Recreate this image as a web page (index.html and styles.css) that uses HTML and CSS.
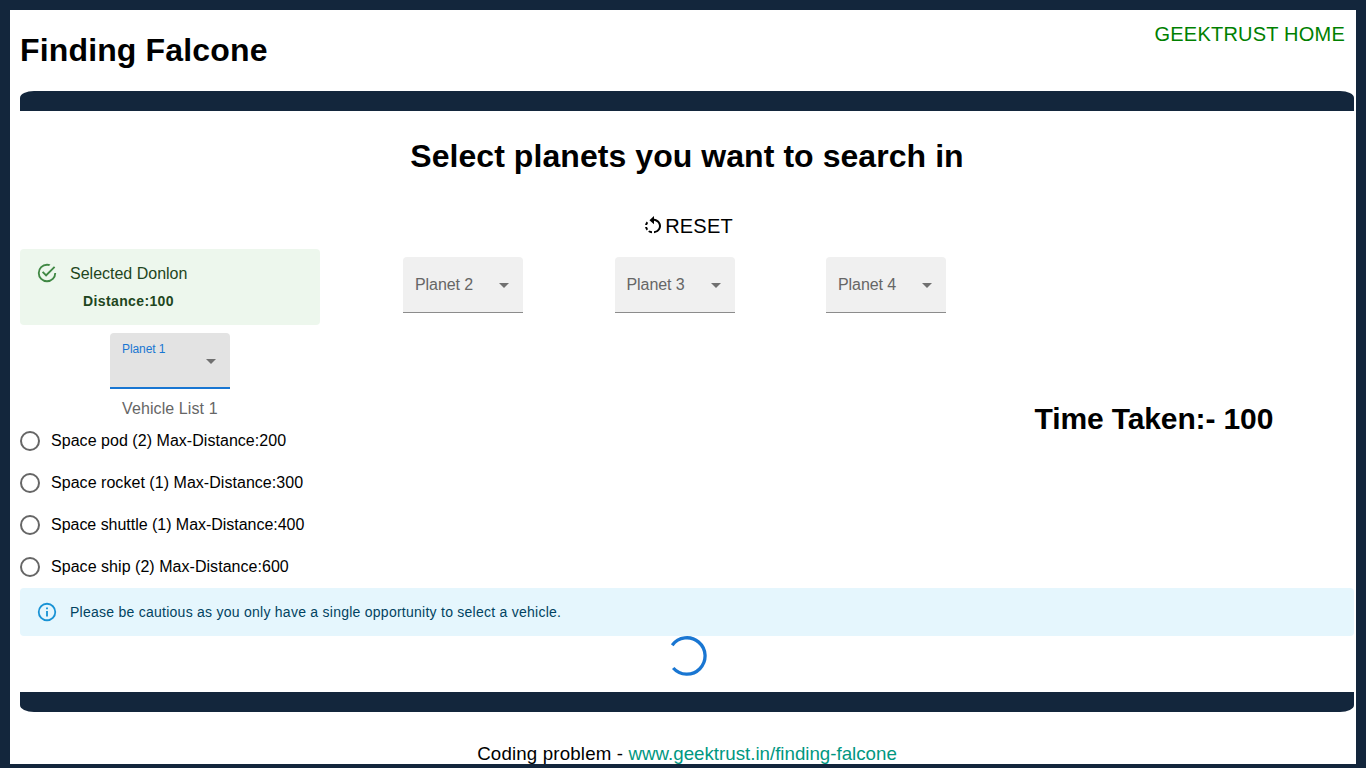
FILE: index.html
```
<!DOCTYPE html>
<html lang="en">
<head>
<meta charset="utf-8">
<title>Finding Falcone</title>
<link rel="stylesheet" href="styles.css">
</head>
<body>
<div class="app">
  <header class="header">
    <h1 class="brand">Finding Falcone</h1>
    <a class="home">GEEKTRUST HOME</a>
  </header>
  <div class="bar bar-top"></div>
  <main class="main">
    <h2 class="title">Select planets you want to search in</h2>
    <div class="reset">
      <svg class="reset-icon" viewBox="0 0 24 24"><path d="M7.11 8.53 5.7 7.11C4.8 8.27 4.24 9.61 4.07 11h2.02c.14-.87.49-1.72 1.02-2.47zM6.09 13H4.07c.17 1.39.72 2.73 1.62 3.89l1.41-1.42c-.52-.75-.87-1.59-1.01-2.47zm1.01 5.32c1.16.9 2.51 1.44 3.9 1.61V17.9c-.87-.15-1.71-.49-2.46-1.03L7.1 18.32zM13 4.07V1L8.45 5.55 13 10V6.09c2.84.48 5 2.94 5 5.91s-2.16 5.43-5 5.91v2.02c3.95-.49 7-3.85 7-7.93s-3.05-7.44-7-7.93z"/></svg>
      <span>RESET</span>
    </div>
    <div class="board">
      <section class="first">
        <div class="alert success">
          <svg class="alert-icon" viewBox="0 0 24 24"><path d="M20,12A8,8 0 0,1 12,20A8,8 0 0,1 4,12A8,8 0 0,1 12,4C12.76,4 13.5,4.11 14.2,4.31L15.77,2.74C14.61,2.26 13.34,2 12,2A10,10 0 0,0 2,12A10,10 0 0,0 12,22A10,10 0 0,0 22,12M7.91,10.08L6.5,11.5L11,16L21,6L19.59,4.58L11,13.17L7.91,10.08Z"/></svg>
          <div>
            <div class="selected">Selected Donlon</div>
            <div class="distance">Distance:100</div>
          </div>
        </div>
        <div class="select focused"><span class="label">Planet 1</span><svg class="arrow" viewBox="0 0 24 24"><path d="M7 10l5 5 5-5z"/></svg></div>
        <div class="list-label">Vehicle List 1</div>
        <div class="radio"><span class="circle"></span><span>Space pod (2) Max-Distance:200</span></div>
        <div class="radio"><span class="circle"></span><span>Space rocket (1) Max-Distance:300</span></div>
        <div class="radio shuttle"><span class="circle"></span><span>Space shuttle (1) Max-Distance:400</span></div>
        <div class="radio"><span class="circle"></span><span>Space ship (2) Max-Distance:600</span></div>
      </section>
      <section class="slot"><div class="select"><span class="label">Planet 2</span><svg class="arrow" viewBox="0 0 24 24"><path d="M7 10l5 5 5-5z"/></svg></div></section>
      <section class="slot"><div class="select"><span class="label">Planet 3</span><svg class="arrow" viewBox="0 0 24 24"><path d="M7 10l5 5 5-5z"/></svg></div></section>
      <section class="slot"><div class="select"><span class="label">Planet 4</span><svg class="arrow" viewBox="0 0 24 24"><path d="M7 10l5 5 5-5z"/></svg></div></section>
      <h2 class="time">Time Taken:- 100</h2>
    </div>
    <div class="alert info">
      <svg class="alert-icon" viewBox="0 0 24 24"><path d="M11,9H13V7H11M12,20C7.59,20 4,16.41 4,12C4,7.59 7.59,4 12,4C16.41,4 20,7.59 20,12C20,16.41 16.41,20 12,20M12,2A10,10 0 0,0 2,12A10,10 0 0,0 12,22A10,10 0 0,0 22,12A10,10 0 0,0 12,2M11,17H13V11H11V17Z"/></svg>
      <span class="notice">Please be cautious as you only have a single opportunity to select a vehicle.</span>
    </div>
    <svg class="spinner" viewBox="0 0 40 40"><path d="M5.2 9.2 A18.2 18.2 0 1 1 6.2 32"/></svg>
  </main>
  <div class="bar bar-bottom"></div>
  <footer class="footer">Coding problem - <a>www.geektrust.in/finding-falcone</a></footer>
</div>
</body>
</html>
```
FILE: styles.css
```
* { box-sizing: border-box; }
body {
  margin: 0;
  height: 768px;
  overflow: hidden;
  background: #13263c;
  font-family: "Liberation Sans", Arial, sans-serif;
  color: #000;
}
h1, h2 { margin: 0; }
.app { margin: 10px 10px 0; height: 754px; padding: 0 2px 0 10px; background: #fff; overflow: hidden; }
.header { display: flex; justify-content: space-between; height: 81px; padding-right: 9px; }
.brand { padding-top: 22px; font-size: 32px; line-height: 37px; letter-spacing: .15px; }
.home { padding-top: 12px; font-size: 20px; line-height: 24px; letter-spacing: .22px; color: green; }
.bar { height: 20px; background: #13263c; }
.bar-top { border-radius: 14px 14px 0 0 / 7px 7px 0 0; }
.bar-bottom { border-radius: 0 0 14px 14px / 0 0 7px 7px; }
.main { display: flex; flex-direction: column; height: 581px; }
.title { padding-top: 27px; font-size: 32px; line-height: 37px; letter-spacing: .06px; text-align: center; }
.reset { display: flex; justify-content: center; align-items: center; height: 24px; margin-top: 39px; font-size: 20px; letter-spacing: .2px; }
.reset-icon { width: 24px; height: 24px; }
.reset-icon path { transform: scale(1, .9); transform-origin: center; }
.board { display: flex; height: 339px; margin-top: 11px; }
.first { width: 300px; }
.alert { display: flex; border-radius: 4px; padding: 6px 16px; }
.alert-icon { flex: none; width: 22px; height: 22px; margin: 7px 12px 0 0; fill: currentColor; opacity: .9; }
.success { height: 76px; background: #edf7ed; color: #2e7d32; }
.selected { padding-top: 7px; font-size: 16px; line-height: 24px; color: #1e4620; }
.distance { margin: 5px 0 0 13px; font-size: 14px; line-height: 20px; font-weight: 700; letter-spacing: .38px; color: #1e4620; }
.select { display: flex; justify-content: space-between; align-items: center; width: 120px; height: 56px; padding: 0 7px 0 12px; border-radius: 4px 4px 0 0; border-bottom: 1px solid #8c8c8c; background: #f0f0f0; color: #666; font-size: 16px; letter-spacing: -.08px; }
.arrow { width: 24px; height: 24px; fill: #707070; }
.focused { margin: 8px 0 0 90px; padding-top: 2px; border-bottom: 2px solid #1976d2; background: #e3e3e3; color: #1976d2; }
.focused .label { margin-bottom: 24px; font-size: 12px; }
.list-label { margin-top: 8px; padding-left: 102px; font-size: 16px; line-height: 23px; color: #666; letter-spacing: .1px; }
.radio { display: flex; align-items: center; height: 42px; font-size: 16px; letter-spacing: .04px; }
.shuttle { letter-spacing: -.03px; }
.circle { width: 20px; height: 20px; margin-right: 11px; border: 2px solid #666; border-radius: 50%; }
.slot { width: 211.5px; padding: 8px 0 0 83px; }
.time { margin: 151px 0 0 80px; font-size: 30px; line-height: 37px; letter-spacing: -.12px; white-space: nowrap; }
.info { height: 48px; background: #e5f6fd; color: #0288d1; }
.notice { padding-top: 8px; font-size: 14px; line-height: 20px; letter-spacing: .255px; color: #014361; }
.spinner { align-self: center; width: 40px; height: 40px; fill: none; stroke: #1976d2; stroke-width: 3.3; }
.footer { padding-top: 31px; font-size: 18.72px; line-height: 22px; letter-spacing: .16px; text-align: center; }
.footer a { color: #009781; letter-spacing: 0; }
```
